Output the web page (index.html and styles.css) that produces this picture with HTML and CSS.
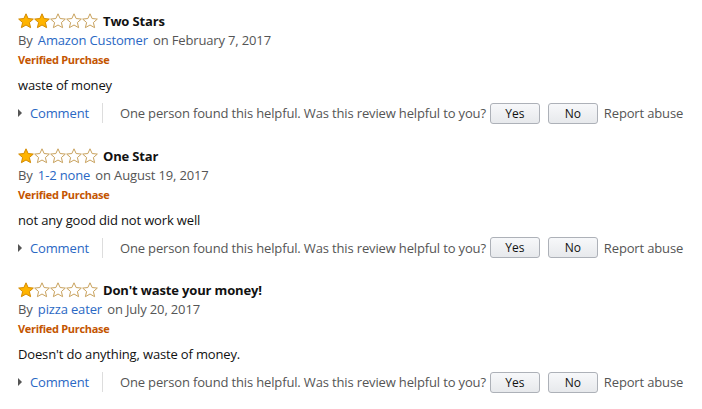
FILE: index.html
```html
<!DOCTYPE html>
<html lang="en">
<head>
  <meta charset="UTF-8" />
  <title>Customer reviews</title>
  <link rel="stylesheet" href="styles.css">
</head>
<body>
  <div class="review">
    <div class="review-head">
      <span class="stars" data-rating="2"></span>
      <span class="title">Two Stars</span>
    </div>
    <div class="byline">By <a href="#">Amazon Customer</a> on February 7, 2017</div>
    <div class="verified">Verified Purchase</div>
    <div class="body">waste of money</div>
    <div class="actions">
      <span class="caret"></span><a href="#">Comment</a>
      <span class="sep"></span>
      <span class="helpful">One person found this helpful. Was this review helpful to you?</span>
      <button>Yes</button><button>No</button>
      <span class="report">Report abuse</span>
    </div>
  </div>

  <div class="review">
    <div class="review-head">
      <span class="stars" data-rating="1"></span>
      <span class="title">One Star</span>
    </div>
    <div class="byline">By <a href="#">1-2 none</a> on August 19, 2017</div>
    <div class="verified">Verified Purchase</div>
    <div class="body">not any good did not work well</div>
    <div class="actions">
      <span class="caret"></span><a href="#">Comment</a>
      <span class="sep"></span>
      <span class="helpful">One person found this helpful. Was this review helpful to you?</span>
      <button>Yes</button><button>No</button>
      <span class="report">Report abuse</span>
    </div>
  </div>

  <div class="review">
    <div class="review-head">
      <span class="stars" data-rating="1"></span>
      <span class="title">Don't waste your money!</span>
    </div>
    <div class="byline">By <a href="#">pizza eater</a> on July 20, 2017</div>
    <div class="verified">Verified Purchase</div>
    <div class="body">Doesn't do anything, waste of money.</div>
    <div class="actions">
      <span class="caret"></span><a href="#">Comment</a>
      <span class="sep"></span>
      <span class="helpful">One person found this helpful. Was this review helpful to you?</span>
      <button>Yes</button><button>No</button>
      <span class="report">Report abuse</span>
    </div>
  </div>

  <script>
    // draw the five stars for each rating
    const star = (filled) => `
      <svg width="16" height="16" viewBox="0 0 24 24">
        <path d="M12 1.2l3.2 7.1 7.8.8-5.9 5.2 1.8 7.7L12 18l-6.9 4 1.8-7.7-5.9-5.2 7.8-.8z"
          fill="${filled ? '#ffb400' : '#fff'}" stroke="${filled ? '#d38a00' : '#c8a15c'}" stroke-width="1.5" stroke-linejoin="round"/>
      </svg>`;
    document.querySelectorAll('.stars').forEach(el => {
      const n = parseInt(el.dataset.rating);
      let html = '';
      for (let i = 0; i < 5; i++) html += star(i < n);
      el.innerHTML = html;
    });
  </script>
</body>
</html>
```

FILE: styles.css
```css
body {
  margin: 0;
  padding: 10px 18px 0;
  background: #fff;
  color: #111;
  font-family: "Open Sans", Arial, sans-serif;
  font-size: 13px;
  letter-spacing: -0.15px;
}
a {
  color: #2a68c4;
  text-decoration: none;
}
.review {
  height: 134.5px;
}
.review-head {
  display: flex;
  align-items: center;
  height: 22px;
}
.stars {
  display: flex;
  width: 80px;
  margin-right: 5px;
}
.stars svg {
  display: block;
}
.title {
  font-weight: bold;
  color: #111;
}
.byline {
  color: #555;
  line-height: 19px;
  margin-top: -1px;
}
.byline a {
  margin: 0 2px;
}
.verified {
  color: #c45500;
  font-size: 11px;
  font-weight: bold;
  line-height: 20px;
  letter-spacing: -0.3px;
}
.body {
  margin-top: 6px;
  line-height: 18px;
}
.actions {
  display: flex;
  align-items: center;
  margin-top: 7px;
  height: 24px;
  color: #555;
  white-space: nowrap;
}
.actions > * {
  flex-shrink: 0;
}
.caret {
  width: 0;
  height: 0;
  border-left: 4px solid #555;
  border-top: 4px solid transparent;
  border-bottom: 4px solid transparent;
  margin-right: 8px;
}
.sep {
  width: 1px;
  height: 20px;
  background: #ddd;
  margin: 0 17px 0 13px;
}
button {
  width: 50px;
  height: 21px;
  margin-left: 4px;
  margin-right: 4px;
  padding: 0;
  font-family: inherit;
  font-size: 12px;
  color: #111;
  background: linear-gradient(#f7f8fa, #e7e9ec);
  border: 1px solid #adb1b8;
  border-radius: 3px;
}
.report {
  margin-left: 2px;
}
```
